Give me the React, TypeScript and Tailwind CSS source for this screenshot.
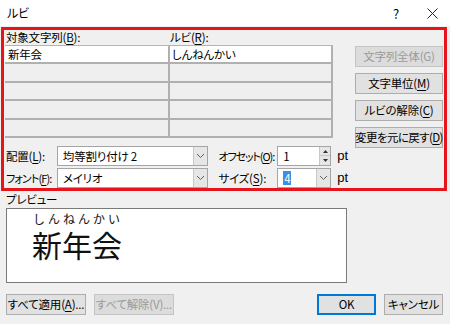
import React from "react";

const jp = "font-['Noto_Sans_CJK_JP','Noto_Sans',sans-serif]";

function U({ c }: { c: string }) {
  return <span className="underline underline-offset-[2px]">{c}</span>;
}

function Btn({ children, w, disabled, primary }: { children: React.ReactNode; w: string; disabled?: boolean; primary?: boolean }) {
  const base = "h-[21px] flex items-center justify-center leading-none whitespace-nowrap border";
  const look = disabled
    ? "bg-[#dcdcdc] border-[#c4c4c4] text-[#9a9a9a]"
    : primary
      ? "bg-[#e1e1e1] border-[#0078d7] border-2 text-black"
      : "bg-[#e1e1e1] border-[#adadad] text-black";
  return <div className={`${base} ${look} ${w}`}>{children}</div>;
}

function Chevron() {
  return (
    <svg width="9" height="6" viewBox="0 0 9 6"><path d="M1 1l3.5 3.5L8 1" fill="none" stroke="#606060" strokeWidth="1" /></svg>
  );
}

function Combo({ value, w, selected }: { value: string; w: string; selected?: boolean }) {
  return (
    <div className={`h-[20px] ${w} flex border border-[#a5a5a5] bg-white`}>
      <div className="flex-1 flex items-center pl-[5px] whitespace-nowrap">
        {selected ? <span className="bg-[#3a8ee6] text-white px-[1px] leading-[14px]">{value}</span> : <span>{value}</span>}
      </div>
      <div className="w-[14px] border-l border-[#c8c8c8] bg-[#e6e6e6] flex items-center justify-center">
        <Chevron />
      </div>
    </div>
  );
}

function Spin() {
  return (
    <div className="h-[20px] w-[54px] flex border border-[#a5a5a5] bg-white">
      <div className="flex-1 flex items-center pl-[5px]">1</div>
      <div className="w-[11px] flex flex-col border-l border-[#c8c8c8]">
        <div className="flex-1 bg-[#e6e6e6] border-b border-[#c8c8c8] flex items-center justify-center">
          <svg width="5" height="3" viewBox="0 0 5 3"><path d="M0 3L2.5 0L5 3z" fill="#333" /></svg>
        </div>
        <div className="flex-1 bg-[#e6e6e6] flex items-center justify-center">
          <svg width="5" height="3" viewBox="0 0 5 3"><path d="M0 0L2.5 3L5 0z" fill="#333" /></svg>
        </div>
      </div>
    </div>
  );
}

const rows = [
  ["新年会", "しんねんかい"],
  ["", ""],
  ["", ""],
  ["", ""],
  ["", ""],
];

export default function App() {
  return (
    <div className={`w-[450px] h-[324px] bg-[#f0f0f0] overflow-hidden text-[11.5px] tracking-[-0.2px] leading-[14px] text-black [font-feature-settings:'palt'_1] ${jp}`}>
      {/* title bar */}
      <div className="h-[26px] bg-white flex items-center">
        <span className="pl-[7px] leading-none text-[12px]">ルビ</span>
        <span className="ml-auto mr-[28px] leading-none text-[13px]">?</span>
        <svg className="mr-[12px]" width="11" height="11" viewBox="0 0 11 11"><path d="M0.5 0.5l10 10M10.5 0.5l-10 10" stroke="#222" strokeWidth="1" /></svg>
      </div>

      {/* highlighted region */}
      <div className="mt-[1px] ml-[1px] w-[446px] h-[164px] border-[3px] border-[#e8141c] flex">
        <div className="w-[344px] pl-[1px]">
          <div className="h-[15px] flex items-center leading-none whitespace-nowrap">
            <span className="pl-[1px] w-[165px]">対象文字列(<U c="B" />):</span>
            <span>ルビ(<U c="R" />):</span>
          </div>
          <div className="w-[328px] border-t border-[#b4b4b4]">
            {rows.map((r, i) => (
              <div key={i} className={`h-[18.4px] flex whitespace-nowrap ${i === 0 ? "bg-white" : "bg-[#efefef]"}`}>
                <div className="w-[165px] border-b-2 border-r-2 border-[#b0b0b0] pl-[3px] flex items-center">{r[0]}</div>
                <div className="flex-1 border-b-2 border-r-2 border-[#b0b0b0] pl-[2px] flex items-center">{r[1]}</div>
              </div>
            ))}
          </div>
          <div className="mt-[8px] flex flex-col gap-[2px] whitespace-nowrap">
            <div className="flex items-center">
              <span className="w-[52px] pl-[1px]">配置(<U c="L" />):</span>
              <Combo value="均等割り付け 2" w="w-[152px]" />
              <span className="ml-[10px] w-[59px] text-[11px] tracking-[-1.1px]">オフセット(<U c="O" />):</span>
              <Spin />
              <span className="ml-[6px] font-['Liberation_Sans',sans-serif] text-[13px] tracking-normal">pt</span>
            </div>
            <div className="flex items-center">
              <span className="w-[52px] pl-[1px] text-[11px] tracking-[-0.9px]">フォント(<U c="F" />):</span>
              <Combo value="メイリオ" w="w-[152px]" />
              <span className="ml-[10px] w-[59px]">サイズ(<U c="S" />):</span>
              <Combo value="4" w="w-[54px]" selected />
              <span className="ml-[6px] font-['Liberation_Sans',sans-serif] text-[13px] tracking-normal">pt</span>
            </div>
          </div>
        </div>
        <div className="ml-[7px] pt-[16px] flex flex-col gap-[6px]">
          <Btn w="w-[88px]" disabled>文字列全体(G)</Btn>
          <Btn w="w-[88px]">文字単位(<U c="M" />)</Btn>
          <Btn w="w-[88px]">ルビの解除(<U c="C" />)</Btn>
          <Btn w="w-[88px] tracking-[-0.6px]">変更を元に戻す(<U c="D" />)</Btn>
        </div>
      </div>

      {/* preview */}
      <div className="h-[17px] pl-[6px] flex items-center leading-none">プレビュー</div>
      <div className="ml-[6px] w-[341px] h-[75px] bg-white border border-[#7a7a7a] pl-[26px] pt-[4px] tracking-normal [font-feature-settings:normal]">
        <div className="text-[12px] leading-[11px] tracking-[3px] text-[#111]">しんねんかい</div>
        <div className="mt-[2px] text-[30px] leading-[36px] text-[#111] -ml-[1px]">新年会</div>
      </div>

      {/* bottom buttons */}
      <div className="mt-[11px] pl-[6px] pr-[7px] flex">
        <Btn w="w-[80px]">すべて適用(<U c="A" />)...</Btn>
        <div className="ml-[8px]">
          <Btn w="w-[80px]" disabled>すべて解除(V)...</Btn>
        </div>
        <div className="ml-auto">
          <Btn w="w-[59px]" primary>OK</Btn>
        </div>
        <div className="ml-[8px]">
          <Btn w="w-[59px]">キャンセル</Btn>
        </div>
      </div>
    </div>
  );
}
